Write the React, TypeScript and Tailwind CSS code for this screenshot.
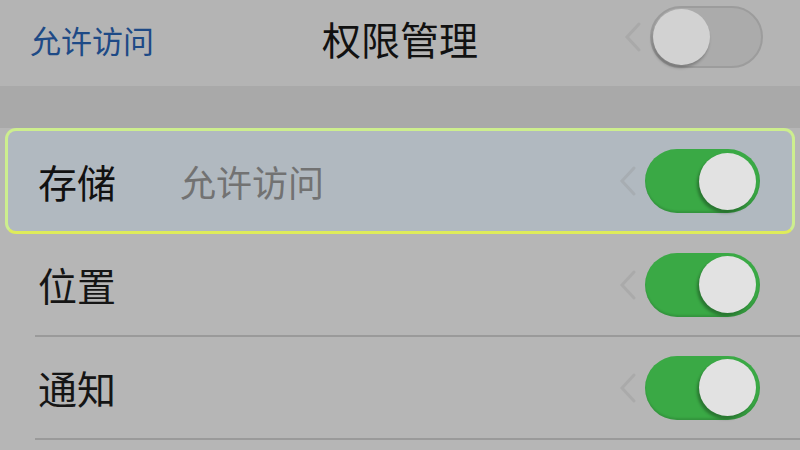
import type { ReactNode } from "react"

const cjk = { fontFamily: '"Noto Sans CJK SC", "Noto Sans", sans-serif' }

function Chevron() {
  return (
    <svg width="22" height="34" viewBox="0 0 22 34" className="mr-[6px] opacity-25">
      <path d="M17 4 L5 17 L17 30" fill="none" stroke="#8a8a8a" strokeWidth="3" strokeLinecap="round" />
    </svg>
  )
}

function Toggle({ on }: { on: boolean }) {
  if (!on) {
    return (
      <div className="flex h-[62px] w-[113px] items-center rounded-full border-2 border-[#9c9c9c] bg-[#ababab] px-[1px]">
        <div className="h-[56px] w-[57px] rounded-full bg-[#d2d2d2] shadow-[-1px_3px_3px_rgba(0,0,0,0.25)]" />
      </div>
    )
  }
  return (
    <div className="flex h-[64px] w-[115px] items-center justify-end rounded-full bg-[#3aa945] pr-[4px] shadow-[inset_0_-2px_2px_rgba(0,0,0,0.12)]">
      <div className="h-[57px] w-[57px] rounded-full bg-[#e2e2e2] shadow-[-2px_3px_3px_rgba(0,0,0,0.3)]" />
    </div>
  )
}

function Row({ label, children }: { label: string; children?: ReactNode }) {
  return (
    <div className="flex h-[103px] flex-col">
      <div className="flex flex-1 items-center pl-[38px] pr-[40px]">
        <span className="text-[39px] leading-none text-[#151515]" style={cjk}>
          {label}
        </span>
        {children}
        <div className="ml-auto flex items-center">
          <Chevron />
          <Toggle on />
        </div>
      </div>
      <div className="ml-[35px] h-[2px] bg-[#9a9a9a]" />
    </div>
  )
}

export default function App() {
  return (
    <div className="flex h-[450px] w-[800px] flex-col overflow-hidden bg-[#b6b6b6]" style={cjk}>
      <header className="grid h-[86px] grid-cols-[1fr_auto_1fr] items-center bg-[#b4b4b4]">
        <span className="pl-[30px] pb-[8px] text-[31px] leading-none text-[#1e4a86]">允许访问</span>
        <span className="pb-[10px] text-[39px] leading-none text-[#111]">权限管理</span>
        <div className="flex items-center justify-end pr-[37px] pb-[12px]">
          <Chevron />
          <Toggle on={false} />
        </div>
      </header>

      <div className="h-[42px] bg-[#a9a9a9]" />

      <div className="mx-[5px] flex h-[106px] items-center rounded-[11px] border-[3px] border-[#cdee8e] border-b-[#dfec5a] bg-[#b1b9c0] pl-[30px] pr-[25px]">
        <span className="text-[39px] leading-none text-[#111]">存储</span>
        <span className="ml-[64px] text-[36px] leading-none text-[#727272]">允许访问</span>
        <div className="ml-auto mr-[7px] flex items-center">
          <Chevron />
          <Toggle on />
        </div>
      </div>

      <Row label="位置" />
      <Row label="通知" />
    </div>
  )
}
